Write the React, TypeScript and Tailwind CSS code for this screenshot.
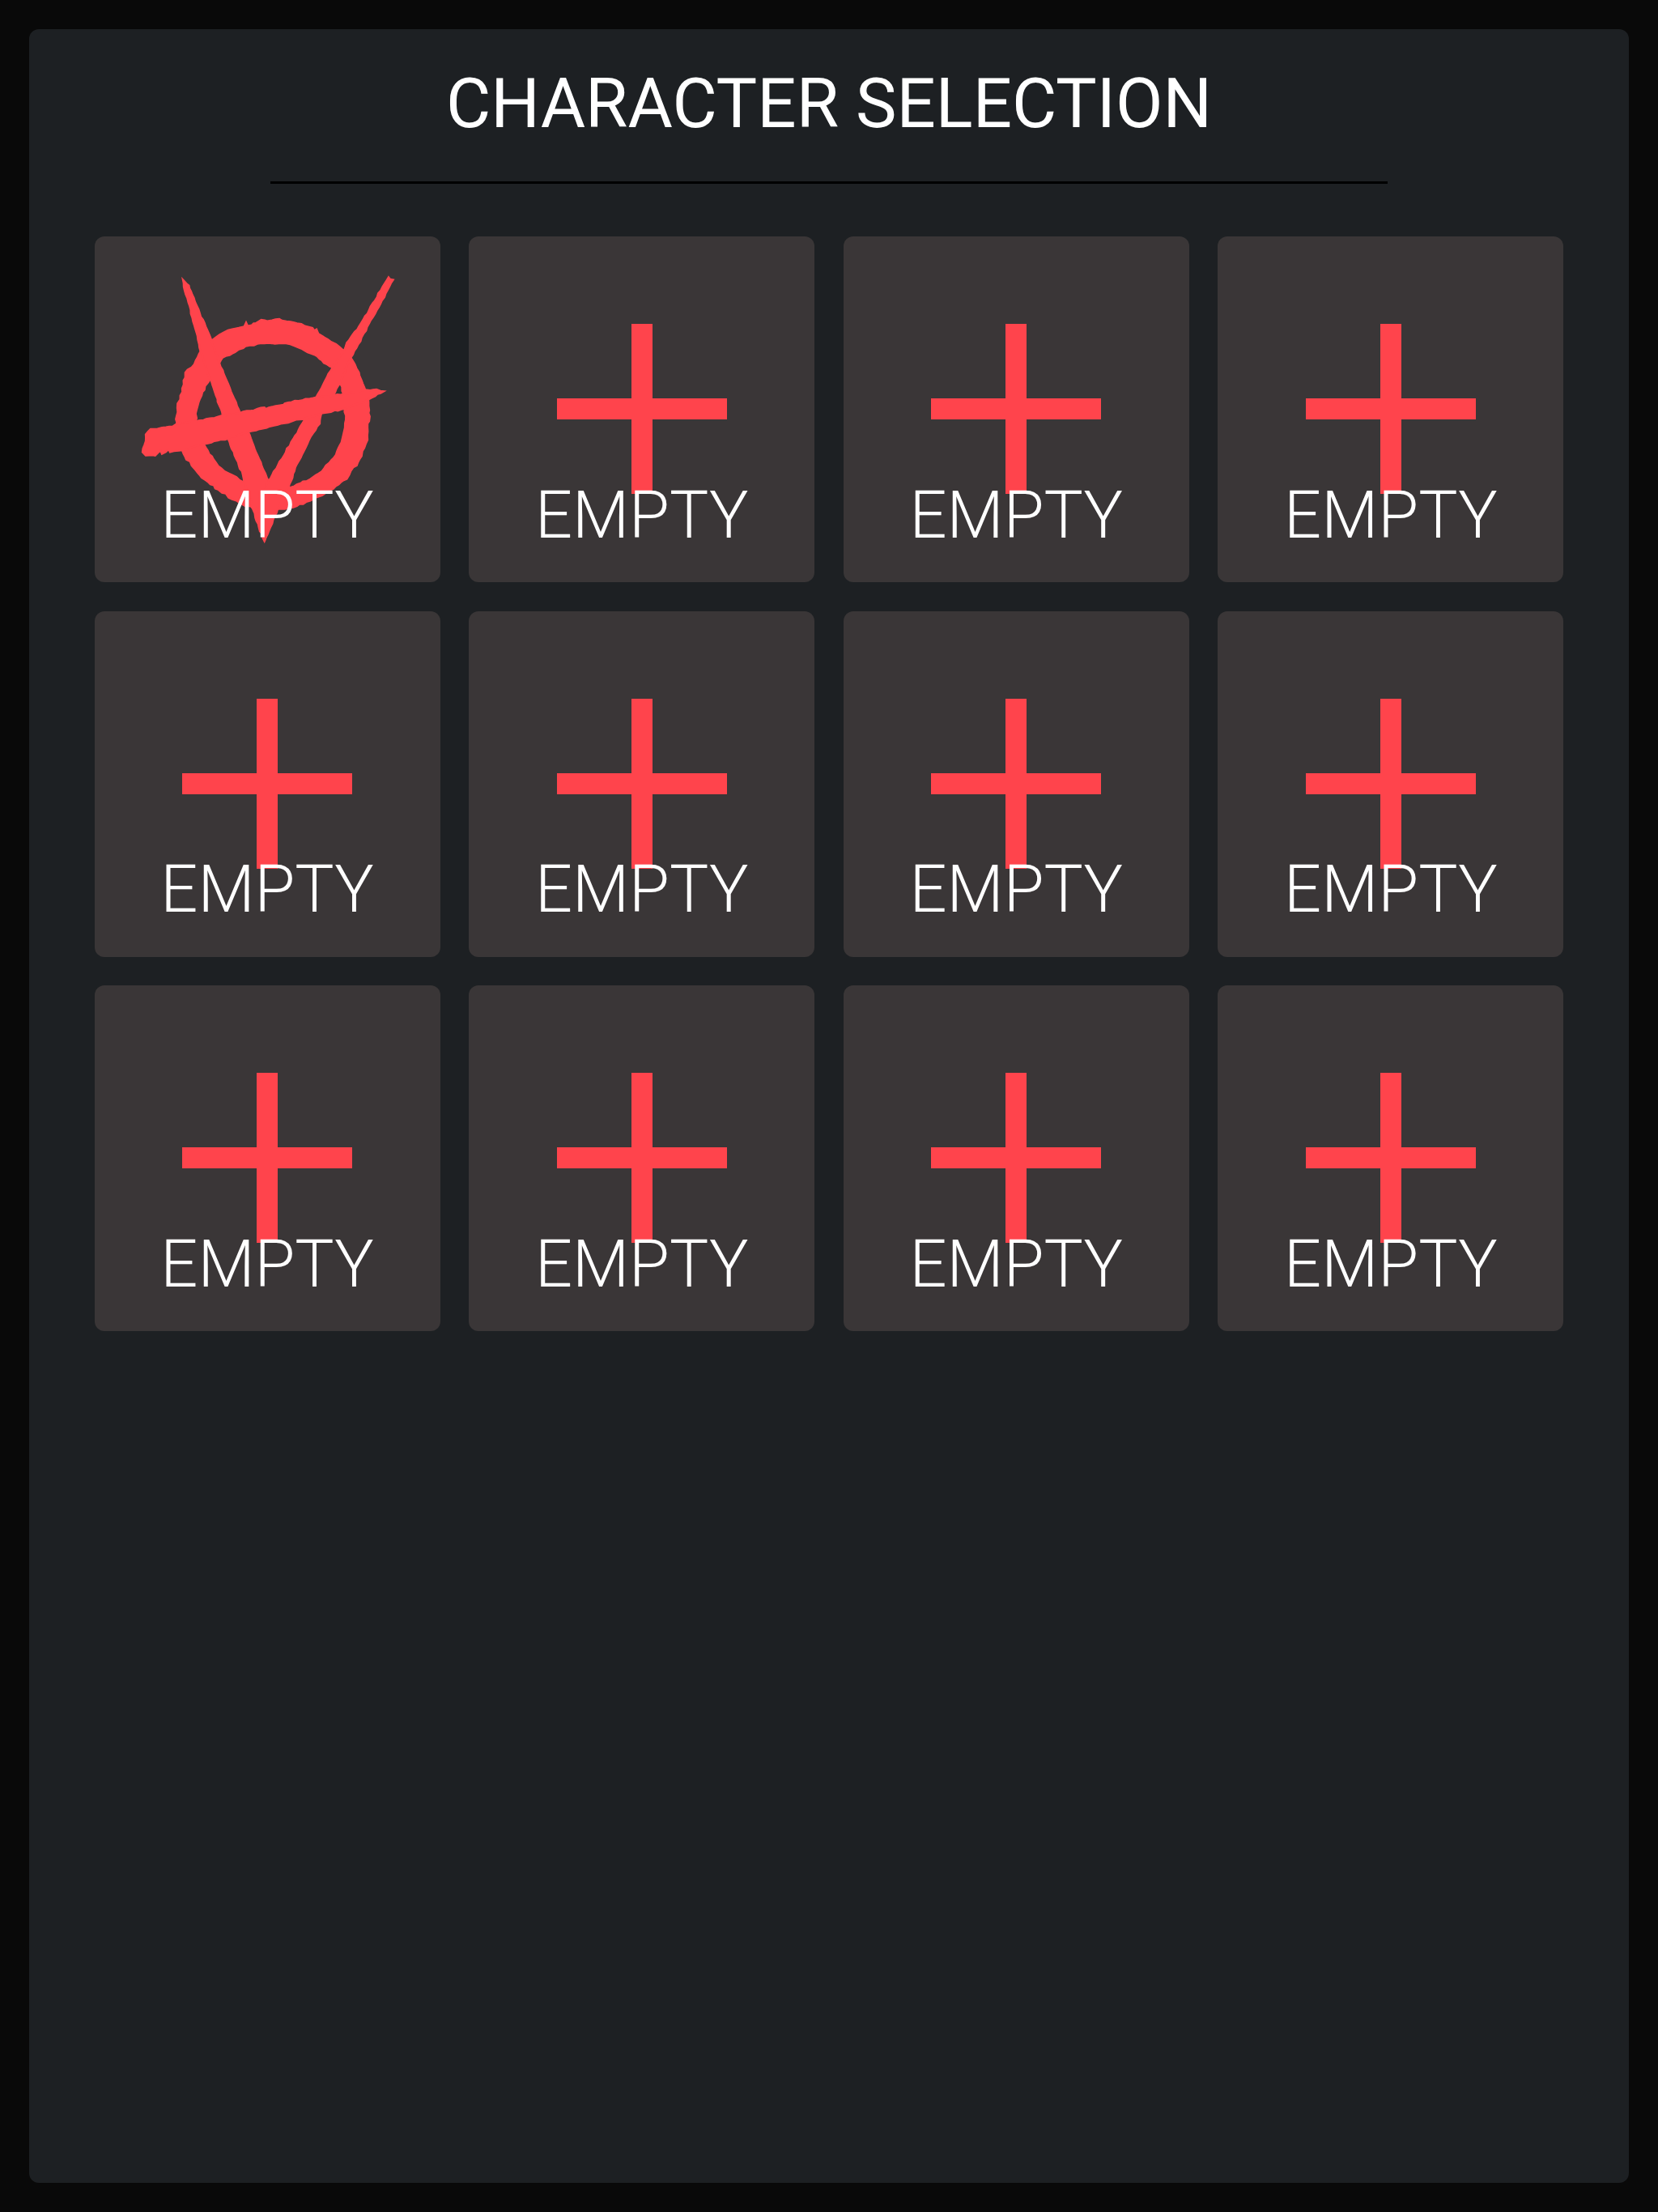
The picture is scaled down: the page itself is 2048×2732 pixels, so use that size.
const ring = "M485 425L500 410L528 392L560 380L585 375L605 370L612 355L618 368L640 358L660 350L668 345L690 350L735 342L745 348L790 355L830 368L858 375L865 385L873 380L880 397L915 418L945 435L978 460L1003 490L1015 510L1030 540L1040 570L1052 600L1065 640L1068 680L1068 720L1062 745L1062 790L1050 820L1040 850L1022 885L1000 905L985 935L955 955L925 975L880 1000L850 1015L800 1035L740 1045L650 1045L600 1030L560 1010L510 975L470 945L440 920L410 885L385 850L375 828L355 735L355 700L358 655L368 640L375 600L380 570L395 530L420 510L443 462ZM513 505L525 485L560 470L585 455L625 440L680 432L760 432L800 445L830 460L875 480L900 505L932 520L960 580L975 625L978 675L982 700L978 745L965 800L945 845L920 875L880 915L850 935L800 955L780 965L690 975L600 945L560 920L520 895L490 860L470 830L455 805L430 745L425 722L428 680L440 640L460 590L478 563Z";
const leftStroke = "M378 197L392 212L400 218L408 240L428 290L440 320L462 370L485 425L513 505L540 570L590 690L620 760L660 860L695 942L720 1050L680 1165L650 1090L625 1000L605 950L600 920L575 860L545 785L525 700L500 625L478 563L443 462L420 365L398 280L384 235Z";
const rightStroke = "M1140 187L1146 195L1157 197L1000 485L960 580L935 625L890 695L885 730L860 765L800 880L780 940L745 1010L680 1165L650 1050L695 942L835 705L870 635L932 520L975 460L985 430L1000 410L1030 370Z";
const bar = "M228 835L240 795L240 770L258 750L340 740L355 730L425 722L520 700L590 690L680 670L685 675L750 660L755 655L860 635L935 625L975 620L1060 605L1095 603L1122 610L1090 628L1065 640L978 675L900 690L835 708L620 760L545 785L455 805L375 828L330 835L325 825L300 842L295 830L275 848L240 848Z";

// Brushed, slightly torn edge: subdivide each outline and nudge the points by a fixed noise.
function rough(d: string, amount: number) {
  let seed = 1;
  const noise = () => {
    seed += 1;
    const v = Math.sin(seed * 12.9898) * 43758.5453;
    return (v - Math.floor(v) - 0.5) * 2 * amount;
  };
  return d
    .split("Z")
    .filter(Boolean)
    .map((sub) => {
      const pts = sub
        .replace("M", "")
        .split("L")
        .map((p) => p.trim().split(" ").map(Number));
      const out: string[] = [];
      pts.forEach((p, i) => {
        const q = pts[(i + 1) % pts.length];
        const len = Math.hypot(q[0] - p[0], q[1] - p[1]);
        const n = Math.max(1, Math.round(len / 14));
        for (let k = 0; k < n; k++) {
          const t = k / n;
          const x = p[0] + (q[0] - p[0]) * t + (k ? noise() : 0);
          const y = p[1] + (q[1] - p[1]) * t + (k ? noise() : 0);
          out.push(`${x.toFixed(1)} ${y.toFixed(1)}`);
        }
      });
      return "M" + out.join("L") + "Z";
    })
    .join("");
}

const roughRing = rough(ring, 3.5);
const roughLeft = rough(leftStroke, 2);
const roughRight = rough(rightStroke, 2);
const roughBar = rough(bar, 2.5);

function Card({ logo }: { logo?: boolean }) {
  return (
    <div className="grid h-[427px] w-[427px] place-items-center rounded-[12px] bg-[#3a3637]">
      {logo ? (
        <svg className="col-start-1 row-start-1 h-[427px] w-[427px]" viewBox="51 36 1281 1281" fill="#ff444c" stroke="#ff444c" strokeWidth="7">
          <path d={roughRing} fillRule="evenodd" />
          <path d={roughLeft} />
          <path d={roughRight} />
          <path d={roughBar} />
        </svg>
      ) : (
        <svg className="col-start-1 row-start-1 mb-[1px] h-[210px] w-[210px]" viewBox="0 0 210 210" fill="#ff444c">
          <rect x="92" y="0" width="26" height="210" />
          <rect x="0" y="92" width="210" height="26" />
        </svg>
      )}
      <div className="col-start-1 row-start-1 mt-[261px] font-['Roboto',sans-serif] text-[81px] leading-[95px] font-light text-white">
        EMPTY
      </div>
    </div>
  );
}

export default function App() {
  return (
    <div className="h-[2732px] w-[2048px] bg-[#090909] p-[36px]">
      <div className="flex h-full flex-col items-center rounded-[12px] bg-[#1d2023]">
        <h1 className="mt-[42px] font-['Roboto',sans-serif] text-[85px] leading-[100px] font-normal text-white">
          CHARACTER SELECTION
        </h1>
        <div className="mt-[46px] h-[3px] w-[1380px] bg-black" />
        <div className="mt-[65px] grid grid-cols-4 gap-[35.6px]">
          {Array.from({ length: 12 }, (_, i) => (
            <Card key={i} logo={i === 0} />
          ))}
        </div>
      </div>
    </div>
  );
}
